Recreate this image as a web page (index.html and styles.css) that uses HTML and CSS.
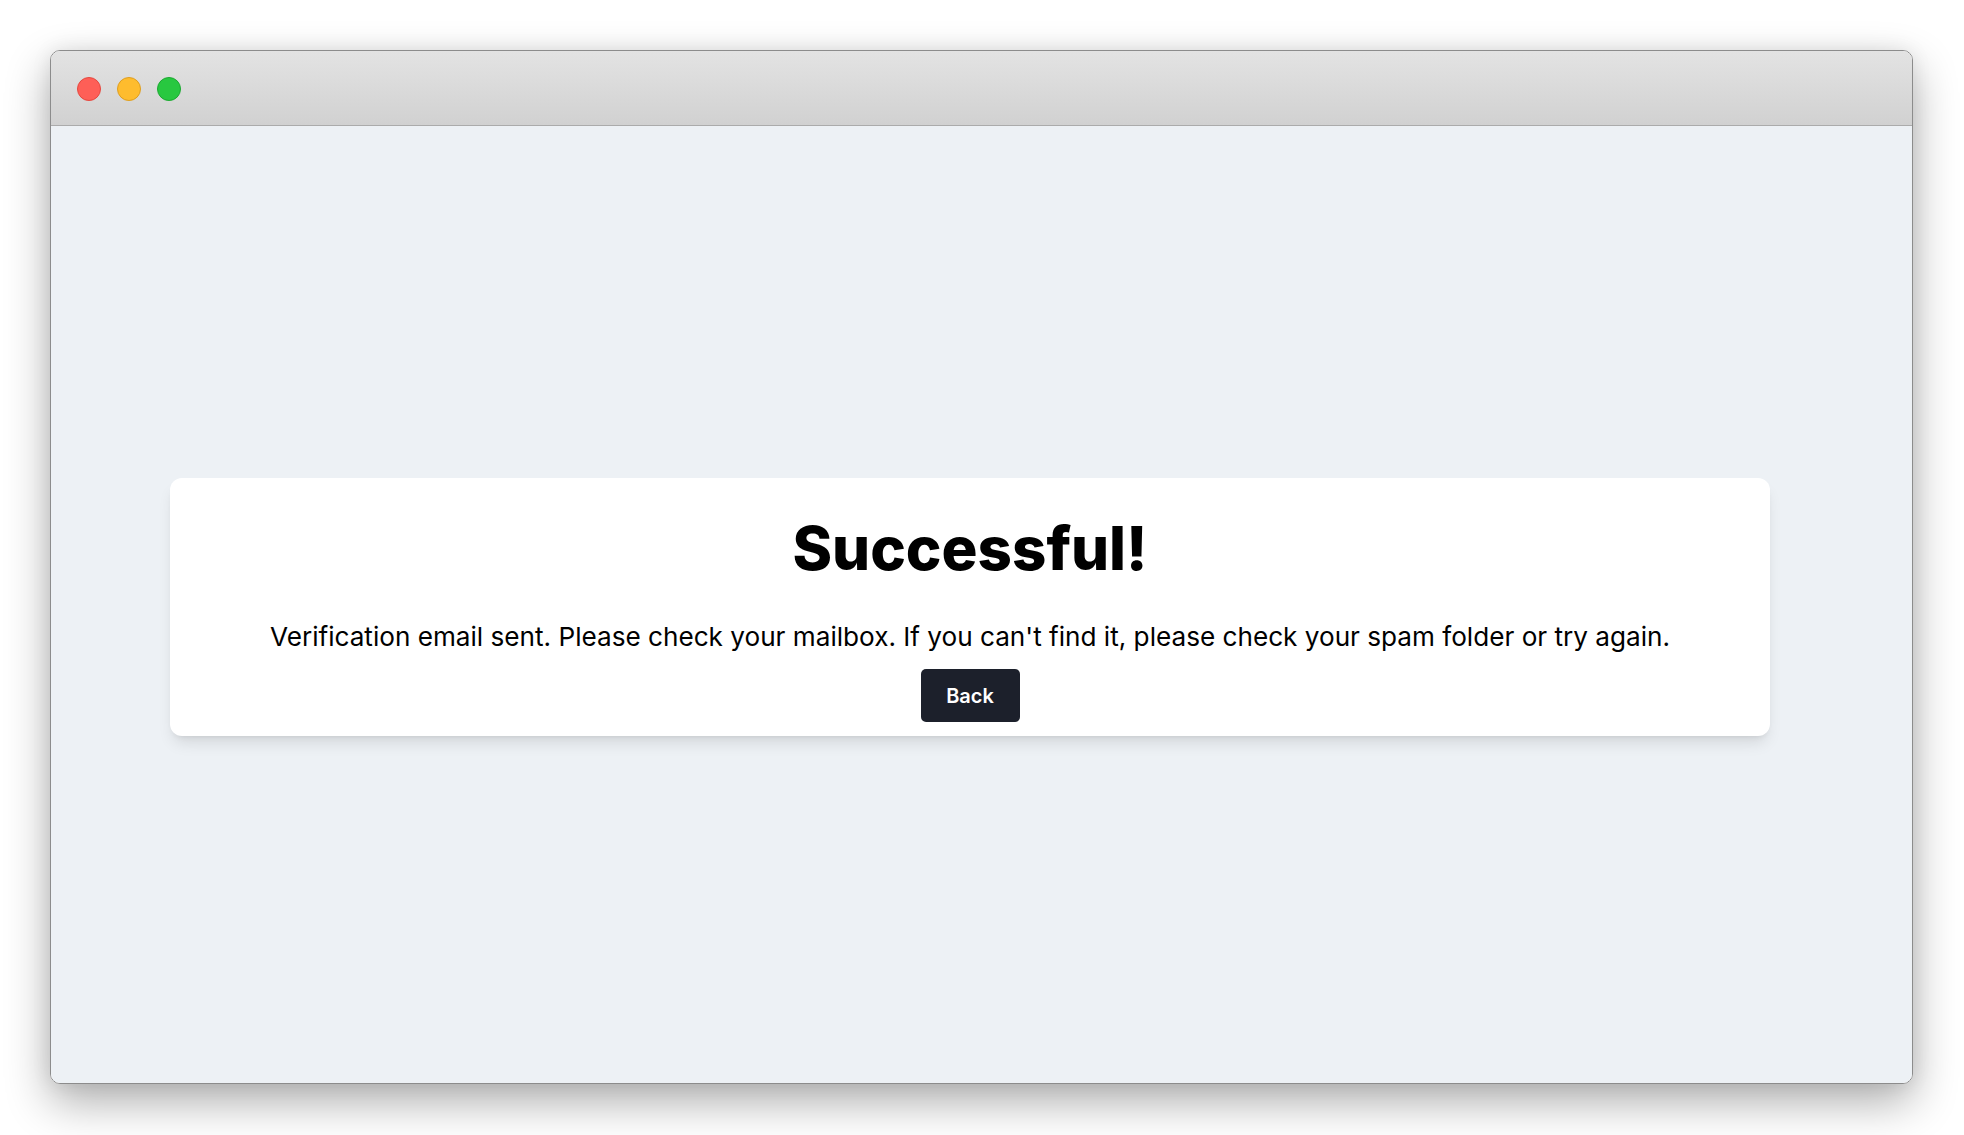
FILE: index.html
```html
<!DOCTYPE html>
<html lang="en">
<head>
<meta charset="utf-8">
<title>Successful!</title>
<link rel="stylesheet" href="styles.css">
</head>
<body>
<div class="window">
  <div class="titlebar">
    <span class="dot dot-red"></span>
    <span class="dot dot-yellow"></span>
    <span class="dot dot-green"></span>
  </div>
  <div class="content">
    <div class="card">
      <h1 class="title">Successful!</h1>
      <p class="message">Verification email sent. Please check your mailbox. If you can't find it, please check your spam folder or try again.</p>
      <button class="btn" type="button">Back</button>
    </div>
  </div>
</div>
</body>
</html>
```
FILE: styles.css
```css
html, body {
  margin: 0;
  padding: 0;
  background: #ffffff;
}
body {
  padding: 50px 0 0 50px;
  height: 1135px;
  box-sizing: border-box;
  font-family: "Inter", "Noto Sans", sans-serif;
}
.window {
  width: 1863px;
  height: 1034px;
  box-sizing: border-box;
  border: 1px solid #8c8c8c;
  border-radius: 10px;
  overflow: hidden;
  display: flex;
  flex-direction: column;
  box-shadow: 0 18px 45px rgba(0, 0, 0, 0.32), 0 0 20px rgba(0, 0, 0, 0.08);
}
.titlebar {
  height: 75px;
  flex: none;
  box-sizing: border-box;
  border-bottom: 1px solid #ababab;
  background: linear-gradient(#e3e3e3, #d1d1d1);
  display: flex;
  align-items: center;
  gap: 16px;
  padding: 2px 0 0 26px;
}
.dot {
  width: 24px;
  height: 24px;
  border-radius: 50%;
  box-sizing: border-box;
}
.dot-red { background: #fe5f57; border: 1px solid #e5483f; }
.dot-yellow { background: #febc2e; border: 1px solid #de9e20; }
.dot-green { background: #28c840; border: 1px solid #1ca931; }
.content {
  flex: 1;
  background: #edf1f5;
  display: flex;
  align-items: center;
  padding: 5px 142px 0 119px;
}
.card {
  width: 100%;
  height: 258px;
  box-sizing: border-box;
  background: #ffffff;
  border-radius: 12px;
  box-shadow: 0 10px 15px -3px rgba(0, 0, 0, 0.1), 0 4px 6px -4px rgba(0, 0, 0, 0.1);
  display: flex;
  flex-direction: column;
  align-items: center;
  padding: 34px 16px 14px;
}
.title {
  margin: 0;
  font-size: 60px;
  line-height: 72px;
  font-weight: 800;
  color: #000000;
}
.message {
  margin: 34.5px 0 14.5px;
  font-size: 26.15px;
  line-height: 36px;
  color: #000000;
}
.btn {
  width: 99px;
  height: 53px;
  flex: none;
  border: none;
  border-radius: 5px;
  background: #1c202b;
  color: #ffffff;
  font-family: inherit;
  font-size: 20px;
  font-weight: 600;
  cursor: pointer;
}
```
